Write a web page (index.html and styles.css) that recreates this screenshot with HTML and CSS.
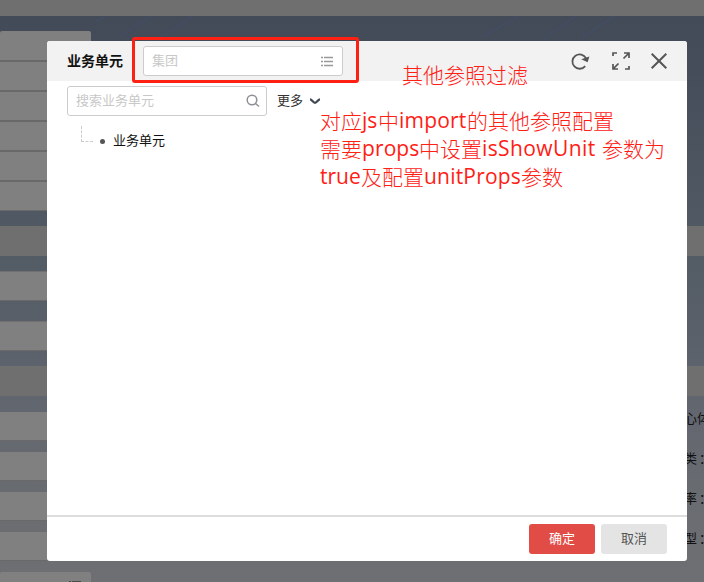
FILE: index.html
```
<!DOCTYPE html>
<html lang="zh-CN">
<head>
<meta charset="utf-8">
<title>业务单元</title>
<link rel="stylesheet" href="styles.css">
</head>
<body>
<div class="page">
  <div class="topbar"></div>
  <div class="form">
    <svg class="streaks" width="704" height="25"><path d="M95 6L106 0M118 22L154 -2M160 22L196 -2M482 22L520 -2M544 22L579 -2M581 22L618 -2"/></svg>
    <div class="stack">
      <div class="field first"></div><div class="field"></div><div class="field"></div>
      <div class="field"></div><div class="field"></div><div class="field"></div>
    </div>
    <div class="band"></div>
    <div class="field single"></div>
    <div class="field single second"></div>
    <div class="band lower"></div>
    <div class="row"><div class="field"></div><span>中心体<i>：</i></span></div>
    <div class="row"><div class="field"></div><span>分类<i>：</i></span></div>
    <div class="row"><div class="field"></div><span>税率<i>：</i></span></div>
    <div class="row"><div class="field"></div><span>类型<i>：</i></span></div>
    <div class="field last"><svg width="12" height="10"><path d="M0 1.5h2M3 1.5h9M0 5.5h2M3 5.5h9"/></svg></div>
  </div>
</div>

<div class="dialog">
  <header>
    <h1>业务单元</h1>
    <div class="input unit"><span>集团</span>
      <svg width="12" height="11" viewBox="0 0 12 11" fill="none" stroke="#999" stroke-width="1.3"><path d="M0 1.5h2M3 1.5h9M0 5.5h2M3 5.5h9M0 9.5h2M3 9.5h9"/></svg>
    </div>
    <div class="tools">
      <svg width="20" height="20" viewBox="0 0 20 20" fill="none" stroke="#555" stroke-width="1.8"><path d="M15.2 15.1A7.2 7.2 0 1 1 16 7.2"/><path d="M11.2 8.2L19.4 5.6L17.6 11.2Z" fill="#555" stroke="none"/></svg>
      <svg width="20" height="20" viewBox="0 0 20 20" fill="none" stroke="#555" stroke-width="1.7"><path d="M2 5V2h4M18 15v3h-4M12.5 7.5l5-5M13 2h5v5M7.5 12.5l-5 5M2 13v5h5"/></svg>
      <svg width="20" height="20" viewBox="0 0 20 20" fill="none" stroke="#555" stroke-width="2"><path d="M2.7 2.7l14.6 14.6M17.3 2.7L2.7 17.3"/></svg>
    </div>
  </header>
  <main>
    <div class="search">
      <div class="input"><span>搜索业务单元</span>
        <svg width="14" height="14" viewBox="0 0 14 14" fill="none" stroke="#8c9097" stroke-width="1.5"><circle cx="6" cy="6" r="4.8"/><path d="M9.5 9.5l3.5 3"/></svg>
      </div>
      <span class="more">更多</span>
      <svg width="12" height="8" viewBox="0 0 12 8" fill="none" stroke="#424b55" stroke-width="2.3"><path d="M1 2.3c2 .2 3 3.5 5 3.5S9 2.5 11 2.3"/></svg>
    </div>
    <div class="tree"><i class="branch"></i><i class="dot"></i><span>业务单元</span></div>
  </main>
  <footer><button class="ok">确定</button><button>取消</button></footer>
</div>

<div class="highlight"></div>
<div class="note title-note">其他参照过滤</div>
<div class="note body-note">
  <div>对应<b class="js">js</b>中<b class="import">import</b>的其他参照配置</div>
  <div>需要<b class="props">props</b>中设置<b class="show">isShowUnit</b>参数为</div>
  <div><b class="true">true</b>及配置<b class="unit-props">unitProps</b>参数</div>
</div>
</body>
</html>
```
FILE: styles.css
```
* { box-sizing: border-box; }
body {
  margin: 0;
  width: 704px;
  height: 582px;
  overflow: hidden;
  position: relative;
  font: 13px/20px "Noto Sans CJK SC", sans-serif;
  color: #111;
}
svg { display: block; flex: none; }
.page {
  height: 582px;
  overflow: hidden;
  background: linear-gradient(#434a58 16px, #454d5a 70px, #505963 220px, #596069 330px, #62666f 410px, #696c70 500px, #6e6f73 582px);
}
.topbar { height: 16px; background: #6f6f6f; }
.form { display: flow-root; position: relative; }
.streaks { position: absolute; left: 0; top: 0; fill: none; stroke: #42516a; stroke-width: 1.5; opacity: .65; }
.stack { padding-top: 15px; }
.field { width: 91px; height: 30px; background: #808080; border-bottom: 2px solid #696969; }
.field.first { border-radius: 2px 2px 0 0; height: 31px; }
.stack .field:last-child { border-bottom-width: 1px; height: 29px; }
.band { height: 30px; margin-top: 15px; background: #6f6f6f; }
.field.single { margin-top: 15px; height: 30px; border-top: 1px solid #707070; border-bottom-width: 1px; }
.field.second { margin-top: 20px; }
.row { display: flex; height: 40px; overflow: hidden; }
.band.lower + .row { margin-top: 11px; }
.row .field { flex: none; height: 29px; border-bottom-width: 1px; margin-top: 5px; }
.row span { flex: none; margin: 1px 0 0 580px; white-space: nowrap; }
.row i { font-style: normal; margin-left: 2px; }
.field.last { margin-top: 5px; height: 20px; border-radius: 2px; padding: 8px 0 0 69px; }
.field.last svg { stroke: #4b4b4b; fill: none; }

.dialog {
  position: absolute;
  left: 47px;
  top: 41px;
  width: 640px;
  height: 520px;
  display: flex;
  flex-direction: column;
  overflow: hidden;
  background: #fff;
  border-radius: 3px;
}
header { display: flex; align-items: center; height: 40px; flex: none; padding: 0 18px 0 20px; background: #f2f2f2; }
h1 { margin: 0; padding-bottom: 2px; width: 76px; font-size: 14px; line-height: 20px; font-weight: 700; }
.input {
  display: flex;
  align-items: center;
  justify-content: space-between;
  width: 200px;
  height: 30px;
  padding: 0 6px 0 8px;
  background: #fff;
  border: 1px solid #ccc;
  border-radius: 3px;
  color: #c8c8c8;
}
.input span { padding-bottom: 3px; }
.unit { padding-right: 9px; }
.tools { display: flex; gap: 21px; margin-left: auto; padding-bottom: 1px; }
.tools svg:last-child { margin-left: -3px; }
main { flex: 1; padding: 5px 20px; }
.search { display: flex; align-items: center; }
.more { margin: 0 6px 0 10px; padding-bottom: 2px; color: #333; }
.tree { display: flex; align-items: center; height: 20px; margin-top: 15px; color: #111; }
.tree span { padding-bottom: 2px; }
.branch { width: 12px; height: 16px; margin: -14px 7px 0 14px; border: dashed #ccc; border-width: 0 0 1px 1px; }
.dot { width: 5px; height: 5px; margin-right: 8px; border-radius: 50%; background: #555; }
footer { display: flex; justify-content: flex-end; gap: 6px; height: 46px; flex: none; padding: 7px 20px; border-top: 2px solid #ddd; }
button { width: 66px; height: 30px; padding: 0 0 3px; border: 0; border-radius: 3px; background: #e4e4e4; color: #555; font: inherit; }
.ok { background: #e14c46; color: #fff; }

.highlight { position: absolute; left: 132px; top: 37px; width: 227px; height: 46px; border: 3px solid #ff2014; border-radius: 3px; }
.note { position: absolute; color: #ff2014; font: 300 21px/28px "Noto Sans CJK SC", sans-serif; white-space: nowrap; }
.title-note { left: 402px; top: 60px; }
.body-note { left: 320px; top: 106px; }
.body-note div { display: flex; height: 28px; }
.body-note b { font: 400 21px/28px "Open Sans", sans-serif; flex: none; }
.js { width: 16px; }
.import { width: 68px; letter-spacing: .2px; }
.props { width: 57px; letter-spacing: .1px; }
.show { width: 120px; letter-spacing: .4px; }
.true { width: 41px; }
.unit-props { width: 97px; letter-spacing: .2px; }
```
